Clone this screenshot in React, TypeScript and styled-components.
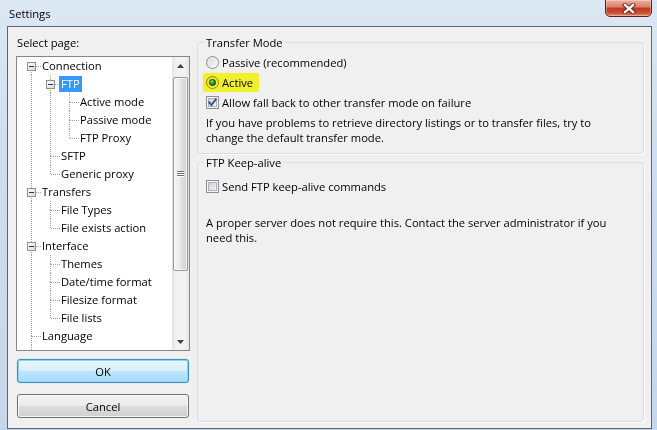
import React from "react";
import styled, { createGlobalStyle } from "styled-components";

interface TreeNode {
  label: string;
  level: number;
  expanded?: boolean;
  selected?: boolean;
  more?: boolean; // further siblings below the visible part of the list
}

const nodes: TreeNode[] = [
  { label: "Connection", level: 0, expanded: true },
  { label: "FTP", level: 1, expanded: true, selected: true },
  { label: "Active mode", level: 2 },
  { label: "Passive mode", level: 2 },
  { label: "FTP Proxy", level: 2 },
  { label: "SFTP", level: 1 },
  { label: "Generic proxy", level: 1 },
  { label: "Transfers", level: 0, expanded: true },
  { label: "File Types", level: 1 },
  { label: "File exists action", level: 1 },
  { label: "Interface", level: 0, expanded: true },
  { label: "Themes", level: 1 },
  { label: "Date/time format", level: 1 },
  { label: "Filesize format", level: 1 },
  { label: "File lists", level: 1 },
  { label: "Language", level: 0, more: true },
];

// true when another node of the same level follows before the branch closes
const continues = (i: number, level: number) => {
  if (nodes[i].more) return true;
  for (let j = i + 1; j < nodes.length; j++) {
    if (nodes[j].level < level) return false;
    if (nodes[j].level === level) return true;
  }
  return false;
};

const ancestorAt = (i: number, level: number) => {
  for (let j = i - 1; j >= 0; j--) {
    if (nodes[j].level === level) return j;
  }
  return -1;
};

const GlobalStyle = createGlobalStyle`
  html, body {
    margin: 0;
    padding: 0;
  }
  body {
    font-family: "Open Sans", "Noto Sans", sans-serif;
    font-size: 11.2px;
    color: #000;
  }
`;

const Window = styled.div`
  width: 657px;
  height: 430px;
  display: flex;
  flex-direction: column;
  overflow: hidden;
  background: linear-gradient(to bottom, #dce8f4 0%, #cfdeee 35%, #c5d7ea 100%);
`;

const TitleBar = styled.div`
  height: 26px;
  flex: none;
  display: flex;
  align-items: flex-start;
  padding-left: 9px;
`;

const Title = styled.div`
  margin-top: 6px;
  line-height: 15px;
`;

const CloseButton = styled.div`
  margin-left: auto;
  margin-right: 5px;
  margin-top: -1px;
  width: 47px;
  height: 18px;
  box-sizing: border-box;
  border: 1px solid #5a2119;
  border-radius: 0 0 5px 5px;
  background: linear-gradient(
    to bottom,
    #eab0a4 0%,
    #dc8069 42%,
    #c4391f 52%,
    #c84a30 78%,
    #e58a6c 100%
  );
  box-shadow: inset 0 0 0 1px rgba(255, 255, 255, 0.3);
  display: flex;
  align-items: center;
  justify-content: center;
`;

const Client = styled.div`
  flex: 1;
  margin: 0 5px 1px 7px;
  border: 1px solid #5b6670;
  background: #f0f0f0;
  display: flex;
  padding: 8px 7px 6px 8px;
`;

const Sidebar = styled.div`
  width: 174px;
  flex: none;
  display: flex;
  flex-direction: column;
`;

const SectionLabel = styled.div`
  line-height: 15px;
  padding-left: 1px;
`;

const TreeBox = styled.div`
  margin-top: 6px;
  height: 295px;
  box-sizing: border-box;
  border: 1px solid #828790;
  background: #fff;
  display: flex;
`;

const TreeList = styled.div`
  flex: 1;
  overflow: hidden;
  padding-left: 5px;
`;

const TreeRow = styled.div`
  display: flex;
  align-items: center;
  height: 18px;
  white-space: nowrap;
`;

const Guide = styled.svg`
  flex: none;
  display: block;
`;

const NodeLabel = styled.span<{ $selected?: boolean }>`
  margin-left: -1px;
  padding: 0 2px;
  line-height: 16px;
  background: ${(p) => (p.$selected ? "#3399ff" : "transparent")};
  color: ${(p) => (p.$selected ? "#fff" : "#000")};
`;

const ScrollBar = styled.div`
  width: 17px;
  flex: none;
  display: flex;
  flex-direction: column;
  background: linear-gradient(to right, #e3e3e3, #f2f2f2 25%, #f2f2f2 75%, #e6e6e6);
`;

const ScrollArrow = styled.div<{ $bottom?: boolean }>`
  height: 17px;
  flex: none;
  margin-top: ${(p) => (p.$bottom ? "auto" : "0")};
  display: flex;
  align-items: center;
  justify-content: center;
`;

const Thumb = styled.div`
  margin: 3px 1px 0 1px;
  height: 194px;
  box-sizing: border-box;
  border: 1px solid #979797;
  border-radius: 2px;
  background: linear-gradient(to right, #f4f4f4 0%, #ececec 45%, #dedede 55%, #d3d3d3 100%);
  box-shadow: inset 0 0 0 1px rgba(255, 255, 255, 0.7);
  display: flex;
  align-items: center;
  justify-content: center;
`;

const Button = styled.div<{ $default?: boolean }>`
  height: 24px;
  margin: 0 1px;
  box-sizing: border-box;
  border-radius: 3px;
  display: flex;
  align-items: center;
  justify-content: center;
  border: 1px solid ${(p) => (p.$default ? "#3c8fc4" : "#707070")};
  background: ${(p) =>
    p.$default
      ? "linear-gradient(to bottom, #eaf6fd 0%, #d9f0fc 48%, #bee6fd 52%, #a7d9f5 100%)"
      : "linear-gradient(to bottom, #f2f2f2 0%, #ebebeb 48%, #dddddd 52%, #cfcfcf 100%)"};
  box-shadow: ${(p) =>
    p.$default
      ? "inset 0 0 0 1px #8fd3f4, 0 0 1px #6fc3ee"
      : "inset 0 0 0 1px rgba(255, 255, 255, 0.8)"};
`;

const OkButton = styled(Button)`
  margin-top: 8px;
`;

const CancelButton = styled(Button)`
  margin-top: 11px;
`;

const Content = styled.div`
  flex: 1;
  margin-left: 7px;
  display: flex;
  flex-direction: column;
`;

const Group = styled.fieldset<{ $grow?: boolean }>`
  margin: 0;
  min-width: 0;
  border: 1px solid #d5dfe5;
  border-radius: 3px;
  box-shadow: 1px 1px 0 #fff;
  flex: ${(p) => (p.$grow ? "1" : "none")};
`;

const TransferGroup = styled(Group)`
  padding: 2px 8px 8px 8px;
`;

const KeepAliveGroup = styled(Group)`
  margin-top: 1px;
  padding: 6px 8px 0 8px;
`;

const Legend = styled.legend`
  padding: 0 2px;
  margin-left: -2px;
  line-height: 15px;
`;

const OptionRow = styled.div`
  display: flex;
  align-items: center;
  height: 20px;
`;

const Control = styled.svg`
  flex: none;
  display: block;
  margin-right: 3px;
`;

const Marked = styled.span`
  position: relative;
  display: flex;
  align-items: center;
  margin-left: -3px;
  padding: 0 6px 0 3px;
  height: 19px;

  &::after {
    content: "";
    position: absolute;
    inset: 0;
    background: #ffff30;
    border-radius: 3px;
    box-shadow: 0 0 1px #ffff30;
    mix-blend-mode: multiply;
  }
`;

const Note = styled.p<{ $gap: number }>`
  margin: ${(p) => p.$gap}px 0 0 0;
  line-height: 15px;
`;

const DOT = "#a0a0a0";

const Connector: React.FC<{ top: boolean; bottom: boolean; box: boolean }> = ({
  top,
  bottom,
  box,
}) => (
  <Guide width="19" height="18" shapeRendering="crispEdges">
    {top && <line x1="9.5" y1="0" x2="9.5" y2="9" stroke={DOT} strokeDasharray="1 1" />}
    {bottom && <line x1="9.5" y1="9" x2="9.5" y2="18" stroke={DOT} strokeDasharray="1 1" />}
    <line x1="10" y1="9.5" x2="19" y2="9.5" stroke={DOT} strokeDasharray="1 1" />
    {box && (
      <>
        <defs>
          <linearGradient id="exp" x1="0" y1="0" x2="1" y2="1">
            <stop offset="0" stopColor="#ffffff" />
            <stop offset="1" stopColor="#d8d8d8" />
          </linearGradient>
        </defs>
        <rect x="5.5" y="5.5" width="8" height="8" fill="url(#exp)" stroke="#919191" />
        <line x1="7" y1="9.5" x2="12" y2="9.5" stroke="#1e395b" />
      </>
    )}
  </Guide>
);

const Rail: React.FC<{ on: boolean }> = ({ on }) => (
  <Guide width="19" height="18" shapeRendering="crispEdges">
    {on && <line x1="9.5" y1="0" x2="9.5" y2="18" stroke={DOT} strokeDasharray="1 1" />}
  </Guide>
);

const Radio: React.FC<{ checked?: boolean }> = ({ checked }) => (
  <Control width="13" height="13" viewBox="0 0 13 13">
    <defs>
      <linearGradient id="rfill" x1="0" y1="0" x2="1" y2="1">
        <stop offset="0" stopColor="#d4d4d4" />
        <stop offset="1" stopColor="#fbfbfb" />
      </linearGradient>
      <radialGradient id="rdot" cx="0.4" cy="0.35" r="0.7">
        <stop offset="0" stopColor="#9fe3ff" />
        <stop offset="0.5" stopColor="#2f8fd0" />
        <stop offset="1" stopColor="#0e4f8c" />
      </radialGradient>
    </defs>
    <circle cx="6.5" cy="6.5" r="6" fill="url(#rfill)" stroke="#8d8d8d" />
    <circle cx="6.5" cy="6.5" r="4.5" fill="none" stroke="#f4f4f4" strokeWidth="0.8" />
    {checked && <circle cx="6.5" cy="6.5" r="3.2" fill="url(#rdot)" stroke="#1c4f7a" strokeWidth="0.6" />}
  </Control>
);

const CheckBox: React.FC<{ checked?: boolean }> = ({ checked }) => (
  <Control width="13" height="13" viewBox="0 0 13 13" shapeRendering="geometricPrecision">
    <defs>
      <linearGradient id="cfill" x1="0" y1="0" x2="1" y2="1">
        <stop offset="0" stopColor="#cbcfd5" />
        <stop offset="1" stopColor="#f6f6f6" />
      </linearGradient>
    </defs>
    <rect x="0.5" y="0.5" width="12" height="12" fill="#f4f4f4" stroke="#8f8f8f" />
    <rect x="2.5" y="2.5" width="8" height="8" fill="url(#cfill)" stroke="#aeb3b9" />
    {checked && (
      <path
        d="M3.2 6.4 L5.4 9 L9.8 3.4"
        fill="none"
        stroke="#3d4f7e"
        strokeWidth="1.9"
        strokeLinecap="square"
      />
    )}
  </Control>
);

const CloseGlyph: React.FC = () => (
  <svg width="14" height="11" viewBox="0 0 14 11">
    <g strokeLinecap="square">
      <line x1="3" y1="2" x2="11" y2="9" stroke="#5b1f16" strokeWidth="4.2" />
      <line x1="11" y1="2" x2="3" y2="9" stroke="#5b1f16" strokeWidth="4.2" />
      <line x1="3" y1="2" x2="11" y2="9" stroke="#fff" strokeWidth="2.4" />
      <line x1="11" y1="2" x2="3" y2="9" stroke="#fff" strokeWidth="2.4" />
    </g>
  </svg>
);

const Arrow: React.FC<{ up?: boolean }> = ({ up }) => (
  <svg width="7" height="4" viewBox="0 0 7 4">
    <path d={up ? "M0 4 L3.5 0 L7 4 Z" : "M0 0 L3.5 4 L7 0 Z"} fill="#404040" />
  </svg>
);

const Grip: React.FC = () => (
  <svg width="7" height="7" viewBox="0 0 7 7" shapeRendering="crispEdges">
    {[0, 2, 4].map((y) => (
      <g key={y}>
        <line x1="0" y1={y + 0.5} x2="7" y2={y + 0.5} stroke="#6e6e6e" />
        <line x1="0" y1={y + 1.5} x2="7" y2={y + 1.5} stroke="#ffffff" />
      </g>
    ))}
  </svg>
);

const PageTree: React.FC = () => (
  <TreeBox>
    <TreeList>
      {nodes.map((node, i) => {
        const rails = [];
        for (let k = 0; k < node.level; k++) {
          rails.push(<Rail key={k} on={continues(ancestorAt(i, k), k)} />);
        }
        return (
          <TreeRow key={node.label}>
            {rails}
            <Connector top={i !== 0} bottom={continues(i, node.level)} box={!!node.expanded} />
            <NodeLabel $selected={node.selected}>{node.label}</NodeLabel>
          </TreeRow>
        );
      })}
      {/* the rail of the hidden pages below Language */}
      <TreeRow>
        <Rail on />
      </TreeRow>
    </TreeList>
    <ScrollBar>
      <ScrollArrow>
        <Arrow up />
      </ScrollArrow>
      <Thumb>
        <Grip />
      </Thumb>
      <ScrollArrow $bottom>
        <Arrow />
      </ScrollArrow>
    </ScrollBar>
  </TreeBox>
);

const App: React.FC = () => {
  return (
    <>
      <GlobalStyle />
      <Window>
        <TitleBar>
          <Title>Settings</Title>
          <CloseButton>
            <CloseGlyph />
          </CloseButton>
        </TitleBar>
        <Client>
          <Sidebar>
            <SectionLabel>Select page:</SectionLabel>
            <PageTree />
            <OkButton $default>OK</OkButton>
            <CancelButton>Cancel</CancelButton>
          </Sidebar>
          <Content>
            <TransferGroup>
              <Legend>Transfer Mode</Legend>
              <OptionRow>
                <Radio />
                Passive (recommended)
              </OptionRow>
              <OptionRow>
                <Marked>
                  <Radio checked />
                  Active
                </Marked>
              </OptionRow>
              <OptionRow>
                <CheckBox checked />
                Allow fall back to other transfer mode on failure
              </OptionRow>
              <Note $gap={3}>
                If you have problems to retrieve directory listings or to transfer files, try to
                <br />
                change the default transfer mode.
              </Note>
            </TransferGroup>
            <KeepAliveGroup $grow>
              <Legend>FTP Keep-alive</Legend>
              <OptionRow>
                <CheckBox />
                Send FTP keep-alive commands
              </OptionRow>
              <Note $gap={19}>
                A proper server does not require this. Contact the server administrator if you
                <br />
                need this.
              </Note>
            </KeepAliveGroup>
          </Content>
        </Client>
      </Window>
    </>
  );
};

export default App;
